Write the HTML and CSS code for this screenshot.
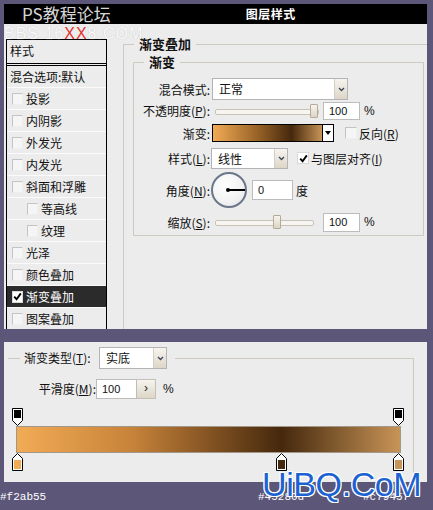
FILE: index.html
```html
<!DOCTYPE html>
<html lang="zh-CN">
<head>
<meta charset="utf-8">
<title>图层样式</title>
<link rel="stylesheet" href="styles.css">
</head>
<body>
<div class="page">
  <section class="dialog">
    <header class="titlebar">
      <span class="brand">PS教程论坛</span>
      <span class="title">图层样式</span>
    </header>
    <div class="dialog-body">
      <ul class="style-list">
        <li class="list-head">样式</li>
        <li class="item plain">混合选项:默认</li>
        <li class="item"><span class="cb"></span>投影</li>
        <li class="item"><span class="cb"></span>内阴影</li>
        <li class="item"><span class="cb"></span>外发光</li>
        <li class="item"><span class="cb"></span>内发光</li>
        <li class="item"><span class="cb"></span>斜面和浮雕</li>
        <li class="item sub"><span class="cb"></span>等高线</li>
        <li class="item sub"><span class="cb"></span>纹理</li>
        <li class="item"><span class="cb"></span>光泽</li>
        <li class="item"><span class="cb"></span>颜色叠加</li>
        <li class="item selected"><span class="cb checked"><svg width="9" height="9" viewBox="0 0 9 9"><path d="M1.2 4.6 L3.6 7.2 L7.8 1.4" fill="none" stroke="#000" stroke-width="1.9"/></svg></span>渐变叠加</li>
        <li class="item"><span class="cb"></span>图案叠加</li>
      </ul>

      <fieldset class="group group-outer">
        <legend>渐变叠加</legend>
        <fieldset class="group group-inner">
          <legend>渐变</legend>

          <div class="row row-blend">
            <span class="lbl">混合模式:</span>
            <div class="select select-blend">
              <span class="select-val">正常</span>
              <span class="select-btn"><svg width="7" height="5" viewBox="0 0 7 5"><path d="M1 1 L3.5 3.5 L6 1" fill="none" stroke="#3b4458" stroke-width="1.3"/></svg></span>
            </div>
          </div>

          <div class="row row-opacity">
            <span class="lbl">不透明度(<u>P</u>):</span>
            <div class="slider slider-opacity"><span class="thumb"></span></div>
            <span class="field field-num">100</span>
            <span class="unit">%</span>
          </div>

          <div class="row row-gradient">
            <span class="lbl">渐变:</span>
            <div class="swatch-wrap">
              <span class="swatch"></span>
              <span class="swatch-btn"><span class="tri"></span></span>
            </div>
            <label class="check check-reverse"><span class="cb"></span>反向(<u>R</u>)</label>
          </div>

          <div class="row row-style">
            <span class="lbl">样式(<u>L</u>):</span>
            <div class="select select-style">
              <span class="select-val">线性</span>
              <span class="select-btn"><svg width="7" height="5" viewBox="0 0 7 5"><path d="M1 1 L3.5 3.5 L6 1" fill="none" stroke="#3b4458" stroke-width="1.3"/></svg></span>
            </div>
            <label class="check check-align"><span class="cb checked"><svg width="9" height="9" viewBox="0 0 9 9"><path d="M1.2 4.6 L3.6 7.2 L7.8 1.4" fill="none" stroke="#000" stroke-width="1.9"/></svg></span>与图层对齐(<u>I</u>)</label>
          </div>

          <div class="row row-angle">
            <span class="lbl">角度(<u>N</u>):</span>
            <div class="dial"></div>
            <span class="field field-angle">0</span>
            <span class="unit unit-deg">度</span>
          </div>

          <div class="row row-scale">
            <span class="lbl">缩放(<u>S</u>):</span>
            <div class="slider slider-scale"><span class="thumb"></span></div>
            <span class="field field-num field-scale">100</span>
            <span class="unit">%</span>
          </div>
        </fieldset>
      </fieldset>

      <div class="wm-bbs">BBS.16<span class="wm-red">XX</span>8.COM</div>
    </div>
  </section>

  <section class="editor">
    <fieldset class="group group-bottom">
      <legend>
        <span class="legend-inner">
          <span class="lbl-type">渐变类型(<u>T</u>):</span>
          <span class="select select-type">
            <span class="select-val">实底</span>
            <span class="select-btn"><svg width="7" height="5" viewBox="0 0 7 5"><path d="M1 1 L3.5 3.5 L6 1" fill="none" stroke="#3b4458" stroke-width="1.3"/></svg></span>
          </span>
        </span>
      </legend>

      <div class="row row-smooth">
        <span class="lbl lbl-smooth">平滑度(<u>M</u>):</span>
        <span class="field field-smooth">100</span>
        <span class="step-btn">›</span>
        <span class="unit unit-smooth">%</span>
      </div>

      <div class="stops">
        <div class="bar"></div>
        <svg class="stop stop-top stop-a" width="11" height="18" viewBox="0 0 11 18"><path d="M0.5 0.5 H10.5 V12.5 L5.5 17.5 L0.5 12.5 Z" fill="#fff" stroke="#000"/><rect x="2" y="2" width="7" height="8" fill="#000"/></svg>
        <svg class="stop stop-top stop-c" width="11" height="18" viewBox="0 0 11 18"><path d="M0.5 0.5 H10.5 V12.5 L5.5 17.5 L0.5 12.5 Z" fill="#fff" stroke="#000"/><rect x="2" y="2" width="7" height="8" fill="#000"/></svg>
        <svg class="stop stop-bottom stop-a" width="11" height="18" viewBox="0 0 11 18"><path d="M5.5 0.5 L10.5 5.5 V17.5 H0.5 V5.5 Z" fill="#fff" stroke="#000"/><rect x="2" y="7" width="7" height="9" fill="#f2ab55"/></svg>
        <svg class="stop stop-bottom stop-b" width="11" height="18" viewBox="0 0 11 18"><path d="M5.5 0.5 L10.5 5.5 V17.5 H0.5 V5.5 Z" fill="#fff" stroke="#000"/><rect x="2" y="7" width="7" height="9" fill="#45280d"/></svg>
        <svg class="stop stop-bottom stop-c" width="11" height="18" viewBox="0 0 11 18"><path d="M5.5 0.5 L10.5 5.5 V17.5 H0.5 V5.5 Z" fill="#fff" stroke="#000"/><rect x="2" y="7" width="7" height="9" fill="#c79457"/></svg>
      </div>
    </fieldset>
  </section>

  <footer class="hexes">
    <span>#f2ab55</span>
    <span>#45280d</span>
    <span>#c79457</span>
  </footer>

  <div class="wm-uibq">UiBQ.CoM</div>
</div>
</body>
</html>
```

FILE: styles.css
```css
* { box-sizing: border-box; }
html, body { margin: 0; padding: 0; }
body {
  width: 433px;
  height: 510px;
  overflow: hidden;
  background: #5c5679;
  font-family: "Noto Sans CJK SC", "Liberation Sans", sans-serif;
  font-size: 12px;
  color: #111;
}
u { text-decoration: underline; text-underline-offset: 1px; }

.page {
  position: relative;
  width: 433px;
  height: 510px;
  padding-top: 4px;
}

/* ---------- top dialog ---------- */
.dialog {
  width: 423px;
  height: 325px;
  margin-left: 4px;
  background: #ececec;
  display: flex;
  flex-direction: column;
}
.titlebar {
  flex: none;
  height: 20px;
  background: #000;
  display: flex;
  align-items: center;
}
.brand {
  margin-left: 18px;
  font-size: 17px;
  line-height: 20px;
  color: #d6d6d6;
  white-space: nowrap;
}
.title {
  margin-left: 135px;
  font-size: 12px;
  line-height: 20px;
  font-weight: bold;
  letter-spacing: 0.5px;
  color: #fff;
}
.dialog-body {
  flex: 1;
  min-height: 0;
  position: relative;
  display: flex;
  align-items: flex-start;
  overflow: hidden;
}

/* style list */
.style-list {
  flex: none;
  list-style: none;
  margin: 15px 0 0 2px;
  padding: 0;
  width: 101px;
  height: 300px;
  border: 1px solid #000;
  border-bottom: none;
  background: #ececec;
}
.list-head {
  height: 26px;
  line-height: 22px;
  padding-left: 3px;
  border-bottom: 3px double #000;
}
.item {
  height: 22px;
  display: flex;
  align-items: center;
  padding-left: 5px;
  border-bottom: 1px solid #fbfbfb;
  white-space: nowrap;
}
.item.plain { padding-left: 3px; }
.item.sub { padding-left: 20px; }
.item.selected { background: #2b2b2b; color: #fff; }

.cb {
  flex: none;
  width: 11px;
  height: 12px;
  margin-right: 3px;
  background: #f5f5f5;
  border: 1px solid;
  border-color: #c4c4c4 #efefef #efefef #c4c4c4;
  display: flex;
  align-items: center;
  justify-content: center;
}
.cb.checked { background: #fff; border-color: #d8d8d8; }

/* group boxes */
.group {
  margin: 0;
  padding: 0;
  min-width: 0;
  border: 1px solid #cfcac1;
}
.group legend {
  margin-left: 10px;
  padding: 0 5px;
  font-size: 13px;
  line-height: 14px;
  font-weight: bold;
}
.group-outer {
  flex: 1;
  margin: 13px -10px 0 16px;
  height: 320px;
}
.group-inner {
  margin: 4px 12px 0 9px;
  padding: 9px 0 0 0;
}

.row { display: flex; align-items: center; }
.lbl {
  flex: none;
  width: 76px;
  text-align: right;
  white-space: nowrap;
}
.row-blend { height: 22px; }
.row-opacity { height: 21px; }
.row-gradient { height: 24px; }
.row-style { height: 26px; }
.row-angle { height: 38px; }
.row-scale { height: 26px; }

/* select */
.select {
  display: flex;
  height: 22px;
  background: #fff;
  border: 1px solid #b4b4b8;
  flex: none;
}
.select-val {
  flex: 1;
  padding-left: 6px;
  line-height: 20px;
  white-space: nowrap;
}
.select-btn {
  flex: none;
  width: 13px;
  background: linear-gradient(#f7f4ee, #ddd6c7);
  border-left: 1px solid #d3cfc6;
  display: flex;
  align-items: center;
  justify-content: center;
}
.select-blend { width: 136px; margin-left: 2px; }
.select-style { width: 77px; height: 21px; margin-left: 1px; }
.select-style .select-val { line-height: 19px; }

/* slider */
.slider {
  position: relative;
  flex: none;
  height: 16px;
  margin-left: 5px;
}
.slider::before {
  content: "";
  position: absolute;
  left: 0;
  right: 0;
  top: 6px;
  height: 4px;
  border: 1px solid #c9c3b6;
  border-radius: 2px;
  background: #f7f5f1;
}
.thumb {
  position: absolute;
  top: 1px;
  width: 8px;
  height: 14px;
  background: linear-gradient(#f7f4ed, #ddd5c5);
  border: 1px solid #b3aa98;
  border-radius: 1px;
}
.slider-opacity { width: 104px; }
.slider-opacity .thumb { left: 95px; }
.slider-scale { width: 99px; }
.slider-scale .thumb { left: 58px; }

/* fields */
.field {
  flex: none;
  height: 18px;
  background: #fff;
  border: 1px solid #bcbcbc;
  padding-left: 5px;
  font-family: "Liberation Sans", sans-serif;
  font-size: 11px;
  line-height: 16px;
}
.field-num { width: 37px; margin-left: 4px; }
.field-scale { margin-left: 9px; height: 19px; }
.field-angle { width: 41px; height: 20px; margin-left: 5px; line-height: 18px; }
.unit { margin-left: 4px; font-family: "Liberation Sans", sans-serif; }
.unit-deg { margin-left: 3px; font-family: "Noto Sans CJK SC", sans-serif; }

/* gradient swatch */
.swatch-wrap {
  flex: none;
  display: flex;
  height: 18px;
  margin-left: 2px;
}
.swatch {
  width: 111px;
  border: 1px solid #000;
  background: linear-gradient(90deg, #f2ab55 0%, #9a6428 40%, #45280d 72%, #c79457 100%);
}
.swatch-btn {
  width: 11px;
  border: 1px solid #000;
  border-left: none;
  background: #fff;
  display: flex;
  align-items: center;
  justify-content: center;
}
.tri {
  width: 0;
  height: 0;
  border-left: 3px solid transparent;
  border-right: 3px solid transparent;
  border-top: 4px solid #000;
}

.check { display: flex; align-items: center; white-space: nowrap; }
.check .cb { width: 12px; margin-right: 2px; }
.check-reverse { margin-left: 11px; }
.check-align { margin-left: 9px; }

/* angle dial */
.dial {
  flex: none;
  position: relative;
  width: 36px;
  height: 36px;
  margin-left: 1px;
  border-radius: 50%;
  border: 2px solid #6b778a;
  background: radial-gradient(circle at 40% 35%, #ffffff 0%, #f2f2f2 60%, #dcdcdc 100%);
}
.dial::before {
  content: "";
  position: absolute;
  left: 13px;
  top: 14px;
  width: 4px;
  height: 4px;
  border-radius: 50%;
  background: #000;
}
.dial::after {
  content: "";
  position: absolute;
  left: 15px;
  top: 15px;
  width: 17px;
  height: 2px;
  background: #000;
}

/* watermark (overlay) */
.wm-bbs {
  position: absolute;
  left: 0;
  top: 2px;
  font-family: "Liberation Sans", sans-serif;
  font-size: 16px;
  line-height: 16px;
  letter-spacing: 1px;
  color: #fbfbfb;
  text-shadow: 0 0 1px #b8b8b8;
  white-space: nowrap;
}
.wm-red { color: #e3322f; text-shadow: none; }

/* ---------- bottom gradient editor ---------- */
.editor {
  width: 423px;
  height: 140px;
  margin: 13px 0 0 4px;
  background: #ececec;
  overflow: hidden;
}
.group-bottom {
  margin: 5px 0 0 4px;
  width: 406px;
  height: 170px;
  border-left: none;
  padding: 9px 0 0 0;
}
.group-bottom legend {
  margin-left: 12px;
  padding: 0 8px 0 4px;
  font-weight: normal;
  font-size: 12px;
  line-height: 22px;
}
.legend-inner { display: flex; align-items: center; height: 22px; }
.lbl-type { width: 74px; white-space: nowrap; }
.select-type { width: 68px; height: 22px; margin-left: 1px; }

.row-smooth { height: 21px; }
.lbl-smooth { width: 64px; margin-left: 24px; }
.field-smooth { width: 41px; height: 20px; line-height: 18px; }
.step-btn {
  flex: none;
  width: 19px;
  height: 20px;
  border: 1px solid #c4c0b6;
  border-left: none;
  background: linear-gradient(#f7f4ee, #ddd6c7);
  text-align: center;
  font-family: "Liberation Sans", sans-serif;
  font-size: 12px;
  line-height: 17px;
  color: #222;
}
.unit-smooth { margin-left: 7px; }

.stops {
  position: relative;
  width: 393px;
  height: 63px;
  margin: 9px 0 0 4px;
  padding: 18px 0 0 4px;
}
.bar {
  width: 385px;
  height: 27px;
  border: 1px solid #a2988a;
  background: linear-gradient(90deg, #f2ab55 0%, #c7833a 30%, #45280d 69%, #c79457 100%);
}
.stop { position: absolute; display: block; }
.stop-top { top: 0; }
.stop-bottom { top: 45px; }
.stop-a { left: 0; }
.stop-b { left: 264px; }
.stop-c { left: 381px; }

/* hex captions */
.hexes {
  display: grid;
  grid-template-columns: 258px 105px 1fr;
  margin-top: 8px;
  font-family: "Liberation Mono", monospace;
  font-size: 11px;
  line-height: 14px;
  color: #fff;
}

/* site watermark (overlay) */
.wm-uibq {
  position: absolute;
  left: 262px;
  top: 467px;
  font-family: "Liberation Sans", sans-serif;
  font-size: 34px;
  line-height: 34px;
  letter-spacing: -0.4px;
  color: #1c63d2;
  text-shadow: 1px 0 0 #fff, -1px 0 0 #fff, 0 1px 0 #fff, 0 -1px 0 #fff,
               1px 1px 0 #fff, -1px -1px 0 #fff, 1px -1px 0 #fff, -1px 1px 0 #fff;
  white-space: nowrap;
}
```
